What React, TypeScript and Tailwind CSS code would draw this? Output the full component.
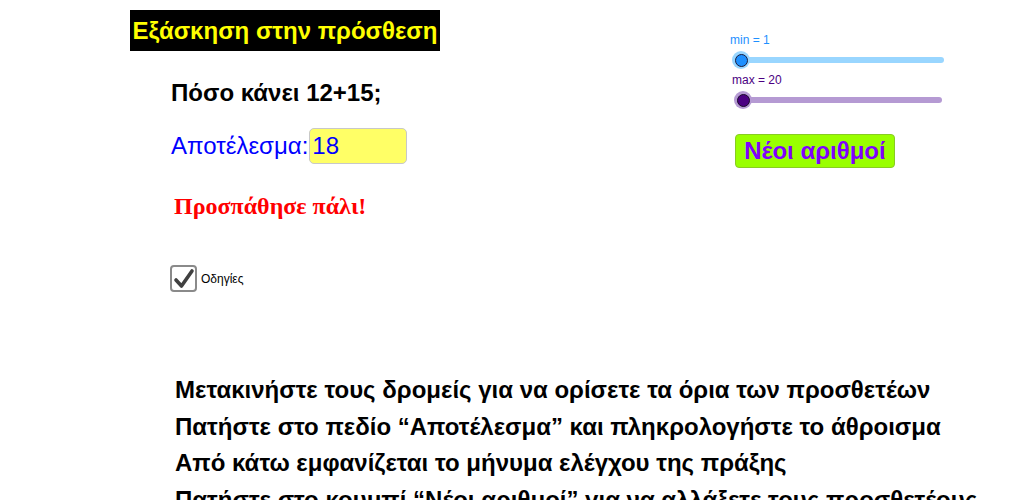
import React from "react";

function Slider({ trackClass, knobClass, innerClass }: { trackClass: string; knobClass: string; innerClass: string }) {
  return (
    <div className="relative h-[18px] w-[216px] flex items-center">
      <div className={trackClass} />
      <div className={knobClass}>
        <div className={innerClass} />
      </div>
    </div>
  );
}

export default function App() {
  return (
    <div
      className="relative w-[1024px] h-[500px] overflow-hidden bg-white flex flex-col"
      style={{ fontFamily: '"Liberation Sans", Arial, sans-serif' }}
    >
      <div className="h-[372px] shrink-0 flex">
        {/* Left column */}
        <div className="ml-[130px] pt-[10px] w-[600px] flex flex-col items-start">
          <div className="w-[310px] h-[41px] bg-black flex items-center justify-center">
            <span className="text-[24px] font-bold text-[#ffff00] leading-none">Εξάσκηση στην πρόσθεση</span>
          </div>

          <div className="mt-[28px] ml-[41px] text-[24px] font-bold text-black leading-[28px]">Πόσο κάνει 12+15;</div>

          <div className="mt-[21px] ml-[41px] h-[36px] flex items-center">
            <span className="text-[24px] text-[#0000ff] leading-[24px] mb-[1px]">Αποτέλεσμα:</span>
            <div className="ml-[1px] w-[98px] h-[36px] bg-[#ffff66] border border-[#c8c8c8] rounded-[5px] flex items-center pl-[2px]">
              <span className="text-[24px] text-[#0000ff] leading-none">18</span>
            </div>
          </div>

          <div
            className="mt-[28px] ml-[44px] text-[24px] font-bold text-[#ff0000] leading-[28px]"
            style={{ fontFamily: '"Liberation Serif", "Times New Roman", serif' }}
          >
            Προσπάθησε πάλι!
          </div>

          <div className="mt-[45px] ml-[40px] flex items-center">
            <div className="w-[27px] h-[27px] border-2 border-[#8a8a8a] rounded-[4px] bg-white flex items-center justify-center">
              <svg width="22" height="22" viewBox="0 0 22 22">
                <path d="M3 12 L8.5 18 L19 3" fill="none" stroke="#404040" strokeWidth="3.6" strokeLinecap="round" strokeLinejoin="round" />
              </svg>
            </div>
            <span className="ml-[4px] text-[12px] text-black leading-none">Οδηγίες</span>
          </div>
        </div>

        {/* Right column */}
        <div className="pt-[34px] w-[220px] flex flex-col items-start">
          <div className="text-[12px] text-[#1e90ff] leading-[13px]">min = 1</div>
          <div className="mt-[4px]">
            <Slider
              trackClass="ml-[5px] w-[209px] h-[6px] rounded-full bg-[#99d6ff]"
              knobClass="absolute left-[2px] top-0 w-[18px] h-[18px] rounded-full bg-[#99d6ff] flex items-center justify-center"
              innerClass="w-[13px] h-[13px] rounded-full bg-[#1e90ff] border border-[#1a1a3a]"
            />
          </div>
          <div className="mt-[5px] ml-[2px] text-[12px] text-[#4b0082] leading-[13px]">max = 20</div>
          <div className="mt-[4px]">
            <Slider
              trackClass="ml-[10px] w-[202px] h-[6px] rounded-full bg-[#b59ad3]"
              knobClass="absolute left-[4px] top-0 w-[18px] h-[18px] rounded-full bg-[#b59ad3] flex items-center justify-center"
              innerClass="w-[13px] h-[13px] rounded-full bg-[#4b0082] border border-[#1a0a2a]"
            />
          </div>
          <div className="mt-[25px] ml-[5px] w-[160px] h-[34px] bg-[#99ff00] border border-[#88cc22] rounded-[4px] flex items-center justify-center">
            <span className="text-[24px] font-bold text-[#8000ff] leading-none">Νέοι αριθμοί</span>
          </div>
        </div>
      </div>

      {/* Instructions */}
      <div className="ml-[175px] flex flex-col text-[24px] font-bold text-black leading-[36.5px] whitespace-nowrap">
        <span>Μετακινήστε τους δρομείς για να ορίσετε τα όρια των προσθετέων</span>
        <span>Πατήστε στο πεδίο “Αποτέλεσμα” και πληκρολογήστε το άθροισμα</span>
        <span>Από κάτω εμφανίζεται το μήνυμα ελέγχου της πράξης</span>
        <span>Πατήστε στο κουμπί “Νέοι αριθμοί” για να αλλάξετε τους προσθετέους</span>
      </div>
    </div>
  );
}
